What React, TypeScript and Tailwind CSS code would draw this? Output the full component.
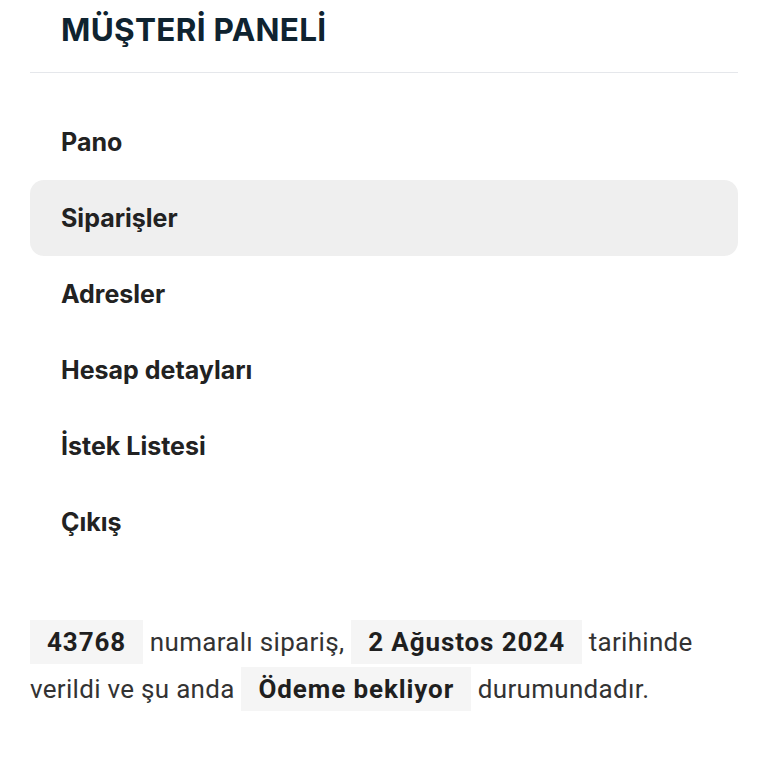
const NAV = ['Pano', 'Siparişler', 'Adresler', 'Hesap detayları', 'İstek Listesi', 'Çıkış'];

function Mark({ children }: { children: React.ReactNode }) {
  return (
    <mark className="bg-[#f5f5f5] text-[#1f1f1f] font-bold tracking-[0.9px] px-[17px] py-[7px]">{children}</mark>
  );
}

export default function App() {
  return (
    <div className="bg-white w-[768px] h-[768px] overflow-hidden px-[30px] font-['Inter',sans-serif]">
      <div className="border-b border-[#e5e7eb] pt-[10px] pb-[22px] pl-[31px]">
        <h1 className="text-[31.5px] leading-[40px] font-bold text-[#0f2330] tracking-[0.3px]">MÜŞTERİ PANELİ</h1>
      </div>

      <nav className="mt-[31px] flex flex-col">
        {NAV.map(item => (
          <a
            key={item}
            className={`h-[76px] flex items-center pl-[31px] pt-[2px] rounded-[14px] text-[25px] font-bold text-[#222] ${
              item === 'Siparişler' ? 'bg-[#efefef]' : ''
            }`}
          >
            {item}
          </a>
        ))}
      </nav>

      <p className="mt-[59px] text-[26px] leading-[47px] tracking-[0.3px] text-[#333] font-['Roboto',sans-serif]">
        <Mark>43768</Mark> numaralı sipariş, <Mark>2 Ağustos 2024</Mark> tarihinde verildi ve şu anda{' '}
        <Mark>Ödeme bekliyor</Mark> durumundadır.
      </p>
    </div>
  );
}
